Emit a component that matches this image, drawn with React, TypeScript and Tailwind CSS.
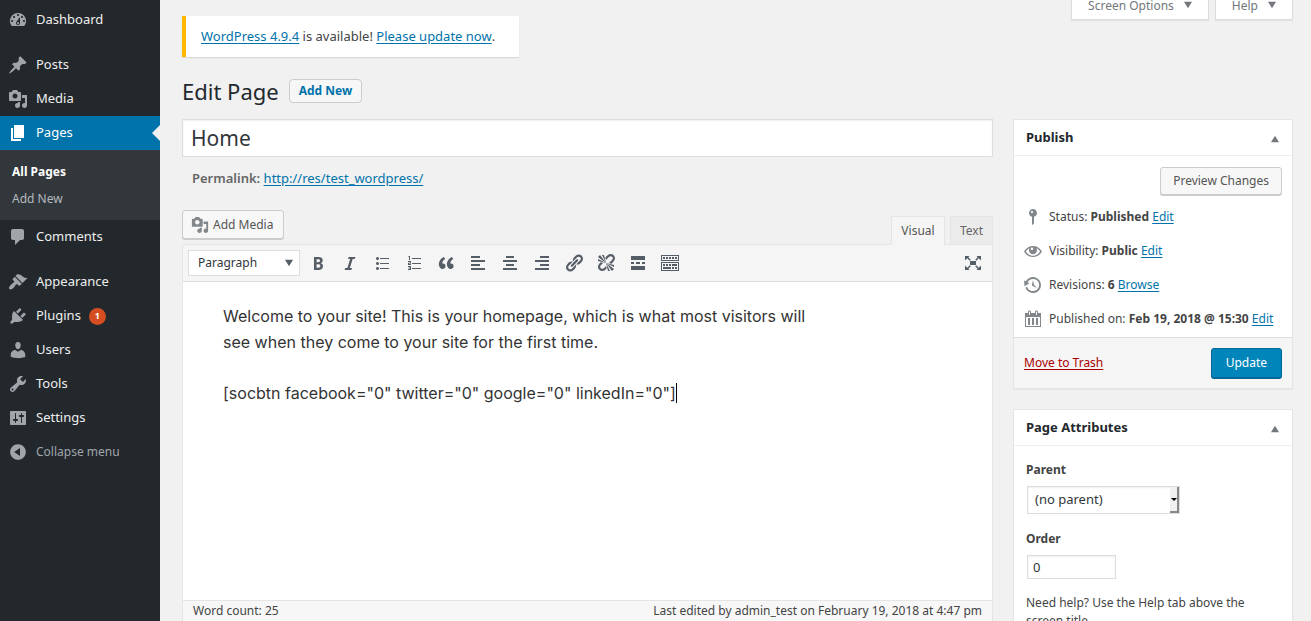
import React from "react";
import type { ReactNode } from "react";

const ICONS = {
  dashboard:
    "M3.76 16h12.48A7.998 7.998 0 0 0 10 3a7.998 7.998 0 0 0-6.24 13zM10 4c.55 0 1 .45 1 1s-.45 1-1 1-1-.45-1-1 .45-1 1-1zM6 6c.55 0 1 .45 1 1s-.45 1-1 1-1-.45-1-1 .45-1 1-1zm8 0c.55 0 1 .45 1 1s-.45 1-1 1-1-.45-1-1 .45-1 1-1zm-5.37 5.55L12 7v6c0 1.1-.9 2-2 2s-2-.9-2-2c0-.57.24-1.08.63-1.45zM4 10c.55 0 1 .45 1 1s-.45 1-1 1-1-.45-1-1 .45-1 1-1zm12 0c.55 0 1 .45 1 1s-.45 1-1 1-1-.45-1-1 .45-1 1-1zm-5 3c0-.55-.45-1-1-1s-1 .45-1 1 .45 1 1 1 1-.45 1-1z",
  post: "M10.44 3.02l1.82-1.82 6.36 6.35-1.83 1.82c-1.05-.68-2.48-.57-3.41.36l-.75.75c-.92.93-1.04 2.35-.35 3.41l-1.83 1.82-2.41-2.41-2.8 2.79c-.42.42-3.38 2.71-3.8 2.29s1.86-3.39 2.28-3.81l2.79-2.79L4.1 9.36l1.83-1.82c1.05.69 2.48.57 3.4-.36l.75-.75c.93-.92 1.05-2.35.36-3.41z",
  media:
    "M13 11V4c0-.55-.45-1-1-1h-1.67L9 1H5L3.67 3H2c-.55 0-1 .45-1 1v7c0 .55.45 1 1 1h10c.55 0 1-.45 1-1zM7 4.5c1.38 0 2.5 1.12 2.5 2.5S8.38 9.5 7 9.5 4.5 8.38 4.5 7 5.62 4.5 7 4.5zM14 6h5v10.5c0 1.38-1.12 2.5-2.5 2.5S14 17.88 14 16.5s1.12-2.5 2.5-2.5c.17 0 .34.02.5.05V9h-3V6zm-4 8.05V13h2v3.5c0 1.38-1.12 2.5-2.5 2.5S7 17.88 7 16.5 8.12 14 9.5 14c.17 0 .34.02.5.05z",
  page: "M6 15V2h10v13H6zm-1 1h8v2H3V5h2v11z",
  comments:
    "M5 2h9c1.1 0 2 .9 2 2v7c0 1.1-.9 2-2 2h-2l-5 5v-5H5c-1.1 0-2-.9-2-2V4c0-1.1.9-2 2-2z",
  appearance:
    "M14.48 11.06L7.41 3.99l1.5-1.5c.5-.56 2.3-.47 3.51.32 1.21.8 1.43 1.28 2.91 2.1 1.18.64 2.45 1.26 4.45.85zm-.71.71L6.7 4.7 4.93 6.47c-.39.39-.39 1.02 0 1.41l1.06 1.06c.39.39.39 1.03 0 1.42-.6.6-1.43 1.11-2.21 1.69-.35.26-.7.53-1.01.84C1.43 14.23.4 16.08 1.4 17.07c.99 1 2.84-.03 4.18-1.36.31-.31.58-.66.85-1.02.57-.78 1.08-1.61 1.69-2.21.39-.39 1.02-.39 1.41 0l1.06 1.06c.39.39 1.02.39 1.41 0z",
  plugins:
    "M13.11 4.36L9.87 7.6 8 5.73l3.24-3.24c.35-.34 1.05-.2 1.56.32.52.51.66 1.21.31 1.55zm-8 1.77l.91-1.12 9.01 9.01-1.19.84c-.71.71-2.63 1.16-3.82 1.16H6.14L4.9 17.26c-.59.59-1.54.59-2.12 0-.59-.58-.59-1.53 0-2.12l1.24-1.24v-3.88c0-1.13.4-3.19 1.09-3.89zm7.26 3.97l3.24-3.24c.34-.35 1.04-.21 1.55.31.52.51.66 1.21.31 1.55l-3.24 3.25z",
  users:
    "M10 9.25c-2.27 0-2.73-3.44-2.73-3.44C7 4.02 7.82 2 9.97 2c2.16 0 2.98 2.02 2.71 3.81 0 0-.41 3.44-2.68 3.44zm0 2.57L12.72 10c2.39 0 4.52 2.33 4.52 4.53v2.49s-3.65 1.13-7.24 1.13c-3.65 0-7.24-1.13-7.24-1.13v-2.49c0-2.25 1.94-4.48 4.47-4.48z",
  tools:
    "M16.68 9.77c-1.34 1.34-3.3 1.67-4.95.99l-5.41 6.52c-.99.99-2.59.99-3.58 0s-.99-2.59 0-3.57l6.52-5.42c-.68-1.65-.35-3.61.99-4.95 1.28-1.28 3.12-1.62 4.72-1.06l-2.89 2.89 2.82 2.82 2.86-2.87c.53 1.58.18 3.39-1.08 4.65zM3.81 16.21c.4.39 1.04.39 1.43 0 .4-.4.4-1.04 0-1.43-.39-.4-1.03-.4-1.43 0-.39.39-.39 1.03 0 1.43z",
  settings:
    "M18 16V4c0-.55-.45-1-1-1H3c-.55 0-1 .45-1 1v12c0 .55.45 1 1 1h14c.55 0 1-.45 1-1zM8 11h1c.55 0 1 .45 1 1s-.45 1-1 1H8v1.5c0 .28-.22.5-.5.5s-.5-.22-.5-.5V13H6c-.55 0-1-.45-1-1s.45-1 1-1h1V5.5c0-.28.22-.5.5-.5s.5.22.5.5V11zm5-2h-1c-.55 0-1-.45-1-1s.45-1 1-1h1V5.5c0-.28.22-.5.5-.5s.5.22.5.5V7h1c.55 0 1 .45 1 1s-.45 1-1 1h-1v5.5c0 .28-.22.5-.5.5s-.5-.22-.5-.5V9z",
  collapse:
    "M10 2.16c4.33 0 7.84 3.51 7.84 7.84s-3.51 7.84-7.84 7.84S2.16 14.33 2.16 10 5.71 2.16 10 2.16zm2 11.72V6.12L6.18 9.97z",
  bold: "M6 4v13h4.54c1.37 0 2.46-.33 3.26-1 .8-.66 1.2-1.58 1.2-2.77 0-.84-.17-1.51-.51-2.01s-.9-.85-1.67-1.03v-.09c.57-.1 1.02-.4 1.36-.9s.51-1.13.51-1.91c0-1.14-.39-1.98-1.17-2.5C12.75 4.26 11.5 4 9.78 4H6zm2.57 5.15V6.26h1.36c.73 0 1.27.11 1.61.32.34.22.51.58.51 1.07 0 .54-.16.92-.47 1.15s-.82.35-1.51.35h-1.5zm0 2.19h1.6c1.44 0 2.16.53 2.16 1.61 0 .6-.17 1.05-.51 1.34s-.86.43-1.57.43H8.57v-3.38z",
  italic: "M14.78 6h-2.13l-2.8 9h2.12l-.62 2H4.6l.62-2h2.14l2.8-9H8.03l.62-2h6.75z",
  ul: "M5.5 7C4.67 7 4 6.33 4 5.5 4 4.68 4.67 4 5.5 4 6.32 4 7 4.68 7 5.5 7 6.33 6.32 7 5.5 7zM8 5h9v1H8V5zm-2.5 7c-.83 0-1.5-.67-1.5-1.5C4 9.68 4.67 9 5.5 9c.82 0 1.5.68 1.5 1.5 0 .83-.68 1.5-1.5 1.5zM8 10h9v1H8v-1zm-2.5 7c-.83 0-1.5-.67-1.5-1.5 0-.82.67-1.5 1.5-1.5.82 0 1.5.68 1.5 1.5 0 .83-.68 1.5-1.5 1.5zM8 15h9v1H8v-1z",
  ol: "M5 3h1v4H5V4H4zM8 5h9v1H8zM4 8h3v2.6H5V11h2v1H4V9.7h2V9H4zM8 10h9v1H8zM4 13h3v4H4v-1h2v-.6H4.6v-.8H6V14H4zM8 15h9v1H8z",
  quote:
    "M9.49 13.22c0-.74-.2-1.38-.61-1.9-.62-.78-1.83-.88-2.53-.72-.29-1.65 1.11-3.75 2.92-4.65L7.88 4c-2.73 1.3-5.42 4.28-4.96 8.05C3.21 14.43 4.59 16 6.54 16c.85 0 1.56-.25 2.12-.75s.83-1.18.83-2.03zm8.05 0c0-.74-.2-1.38-.61-1.9-.63-.78-1.83-.88-2.53-.72-.29-1.65 1.11-3.75 2.92-4.65L15.93 4c-2.73 1.3-5.41 4.28-4.95 8.05.29 2.38 1.66 3.95 3.61 3.95.85 0 1.56-.25 2.12-.75s.83-1.18.83-2.03z",
  alignLeft: "M12 5V3H3v2h9zm5 4V7H3v2h14zm-5 4v-2H3v2h9zm5 4v-2H3v2h14z",
  alignCenter: "M14 5V3H6v2h8zm3 4V7H3v2h14zm-3 4v-2H6v2h8zm3 4v-2H3v2h14z",
  alignRight: "M17 5V3H8v2h9zm0 4V7H3v2h14zm0 4v-2H8v2h9zm0 4v-2H3v2h14z",
  link: "M17.74 2.76c1.68 1.69 1.68 4.41 0 6.1l-1.53 1.52c-1.12 1.12-2.7 1.47-4.14 1.09l2.62-2.61.76-.77.76-.76c.84-.84.84-2.2 0-3.04-.84-.85-2.2-.85-3.04 0l-.77.76-3.38 3.38c-.37-1.44-.02-3.02 1.1-4.14l1.52-1.53c1.69-1.68 4.42-1.68 6.1 0zM8.59 13.43l5.34-5.34c.42-.42.42-1.1 0-1.52-.44-.43-1.13-.39-1.53 0l-5.33 5.34c-.42.42-.42 1.1 0 1.52.44.43 1.13.39 1.52 0zm-.76 2.29l4.14-4.15c.38 1.44.03 3.02-1.09 4.14l-1.52 1.53c-1.69 1.68-4.41 1.68-6.1 0-1.68-1.68-1.68-4.42 0-6.1l1.53-1.52c1.12-1.12 2.7-1.47 4.14-1.1l-4.14 4.15c-.85.84-.85 2.2 0 3.05.84.84 2.2.84 3.04 0z",
  unlink:
    "M17.74 2.26c1.68 1.69 1.68 4.41 0 6.1l-1.53 1.52c-.32.33-.69.58-1.08.77L13 10l1.69-1.64.76-.77.76-.76c.84-.84.84-2.2 0-3.04-.84-.85-2.2-.85-3.04 0l-.77.76-.76.76L10 7l-.65-2.14c.19-.38.44-.75.77-1.07l1.52-1.53c1.69-1.68 4.42-1.68 6.1 0zM2 4l8 6-6-8zm4-2l4 8-2-8H6zM2 6l8 4-8-2V6zm7.36 7.69L10 13l.74 2.35-1.38 1.39c-1.69 1.68-4.41 1.68-6.1 0-1.68-1.68-1.68-4.42 0-6.1l1.39-1.38L7 10l-.69.64-1.52 1.53c-.85.84-.85 2.2 0 3.04.84.85 2.2.85 3.04 0zM18 16l-8-6 6 8zm-4 2l-4-8 2 8h2zm4-4l-8-4 8 2v2z",
  more: "M17 7V3H3v4h14zM6 11V9H3v2h3zm6 0V9H8v2h4zm5 0V9h-3v2h3zm0 6v-4H3v4h14z",
  kitchenSink:
    "M19 2v6H1V2h18zm-1 5V3H2v4h16zM5 4v2H3V4h2zm3 0v2H6V4h2zm3 0v2H9V4h2zm3 0v2h-2V4h2zm3 0v2h-2V4h2zm2 5v9H1V9h18zm-1 8v-7H2v7h16zM5 11v2H3v-2h2zm3 0v2H6v-2h2zm3 0v2H9v-2h2zm6 0v2h-5v-2h5zm-6 3v2H3v-2h8zm3 0v2h-2v-2h2zm3 0v2h-2v-2h2z",
  fullscreen:
    "M2 3h4.500L5.300 4.200 7.800 6.700 6.700 7.800 4.200 5.300 2 7.500zM18 3v4.500l-2.200-2.200-2.500 2.500-1.100-1.100 2.500-2.500L13.500 3zM2 17v-4.500l2.200 2.200 2.500-2.500 1.100 1.100-2.500 2.500L6.500 17zM18 17h-4.500l1.200-1.200-2.500-2.500 1.100-1.100 2.500 2.500 2.200-2.200zM7 8h6v4H7z",
  pin: "M14 6c0 1.86-1.28 3.41-3 3.86V16c0 1-2 2-2 2V9.86c-1.72-.45-3-2-3-3.86 0-2.21 1.79-4 4-4s4 1.79 4 4zM8 5c0 .55.45 1 1 1s1-.45 1-1-.45-1-1-1-1 .45-1 1z",
  eye: "M18.3 9.5C16.6 6.8 13.5 5 10 5S3.4 6.8 1.7 9.5l-.6 1 .6 1C3.4 14.2 6.5 16 10 16s6.600-1.800 8.300-4.500l.6-1zM10 14.800c-2.900 0-5.500-1.600-7.200-4.300 1-1.600 2.300-2.700 3.800-3.500-.4.700-.6 1.400-.6 2.200 0 2.200 1.800 4 4 4s4-1.800 4-4c0-.8-.2-1.500-.6-2.200 1.500.8 2.800 1.900 3.800 3.500-1.700 2.700-4.300 4.300-7.200 4.300zM9 6.500a1.300 1.300 0 1 0 0 2.600 1.300 1.300 0 0 0 0-2.600z",
  backup:
    "M13.65 2.88c3.93 2.01 5.48 6.84 3.47 10.77s-6.83 5.48-10.77 3.47c-1.87-.96-3.2-2.56-3.86-4.4l1.64-1.03c.45 1.57 1.52 2.95 3.08 3.76 3.01 1.54 6.69.35 8.23-2.66 1.55-3.01.36-6.69-2.65-8.24C9.78 3.01 6.1 4.2 4.56 7.21l1.88.97-4.95 3.08-.39-5.82 1.78.91C4.9 2.4 9.75.89 13.65 2.88zm-4.36 7.83C9.11 10.53 9 10.28 9 10c0-.07.03-.12.04-.19h-.01L10 5l.97 4.81L14 13l-4.5-2.12.02-.02c-.08-.04-.16-.09-.23-.15z",
  calendar:
    "M15 4h3v14H2V4h3V3c0-.83.67-1.5 1.5-1.5S8 2.17 8 3v1h4V3c0-.83.67-1.5 1.5-1.5S15 2.17 15 3v1zM6 3v2.5c0 .28.22.5.5.5s.5-.22.5-.5V3c0-.28-.22-.5-.5-.5S6 2.72 6 3zm7 0v2.5c0 .28.22.5.5.5s.5-.22.5-.5V3c0-.28-.22-.5-.5-.5s-.5.22-.5.5zm4 14V8H3v9h14zM7 16V9H5v7h2zm4 0V9H9v7h2zm4 0V9h-2v7h2z",
  down: "M5 6h10l-5 8z",
  up: "M5 14h10l-5-8z",
};

type IconName = keyof typeof ICONS;

function Icon({ name, className = "size-5" }: { name: IconName; className?: string }) {
  return (
    <svg viewBox="0 0 20 20" aria-hidden="true" className={`shrink-0 fill-current ${className}`}>
      <path fillRule="evenodd" d={ICONS[name]} />
    </svg>
  );
}

function MenuItem({ icon, label, badge }: { icon: IconName; label: string; badge?: string }) {
  return (
    <li>
      <a href="#" className="flex h-[34px] items-center gap-2 px-2 text-[13px] text-[#eee]">
        <Icon name={icon} className="size-5 text-[#a0a5aa]" />
        {label}
        {badge && (
          <span className="flex size-[17px] items-center justify-center rounded-full bg-[#d54e21] text-[9px] font-bold text-white">
            {badge}
          </span>
        )}
      </a>
    </li>
  );
}

function Sidebar() {
  return (
    <nav aria-label="Main menu" className="w-40 shrink-0 bg-[#23282d] pt-[3px]">
      <ul>
        <MenuItem icon="dashboard" label="Dashboard" />
        <li className="h-[11px]" />
        <MenuItem icon="post" label="Posts" />
        <MenuItem icon="media" label="Media" />
        <li>
          <a
            href="#"
            className="relative flex h-[34px] items-center gap-2 bg-[#0073aa] px-2 text-[13px] text-white"
          >
            <Icon name="page" />
            Pages
            <span className="absolute top-1/2 right-0 -translate-y-1/2 border-8 border-transparent border-r-[#f1f1f1]" />
          </a>
          <ul className="bg-[#32373c] px-3 py-2 text-[12px]">
            <li>
              <a href="#" className="flex h-[27px] items-center font-bold text-white">
                All Pages
              </a>
            </li>
            <li>
              <a href="#" className="flex h-[27px] items-center text-[#b4b9be]">
                Add New
              </a>
            </li>
          </ul>
        </li>
        <MenuItem icon="comments" label="Comments" />
        <li className="h-[11px]" />
        <MenuItem icon="appearance" label="Appearance" />
        <MenuItem icon="plugins" label="Plugins" badge="1" />
        <MenuItem icon="users" label="Users" />
        <MenuItem icon="tools" label="Tools" />
        <MenuItem icon="settings" label="Settings" />
        <li>
          <button type="button" className="flex h-[34px] items-center gap-2 px-2 text-[12px] text-[#a0a5aa]">
            <Icon name="collapse" />
            Collapse menu
          </button>
        </li>
      </ul>
    </nav>
  );
}

function TextLink({ children }: { children: ReactNode }) {
  return (
    <a href="#" className="text-[#0073aa] underline underline-offset-2">
      {children}
    </a>
  );
}

function ScreenTab({ children }: { children: ReactNode }) {
  return (
    <button
      type="button"
      className="flex h-5 items-start gap-[6px] border border-t-0 border-[#ddd] bg-white pr-3 pl-4 text-[12px] leading-3 text-[#72777c] shadow-[0_1px_1px_rgba(0,0,0,0.06)]"
    >
      {children}
      <Icon name="down" className="-mt-[3px] size-4" />
    </button>
  );
}

const TOOLS: { icon: IconName; label: string }[] = [
  { icon: "bold", label: "Bold" },
  { icon: "italic", label: "Italic" },
  { icon: "ul", label: "Bulleted list" },
  { icon: "ol", label: "Numbered list" },
  { icon: "quote", label: "Blockquote" },
  { icon: "alignLeft", label: "Align left" },
  { icon: "alignCenter", label: "Align center" },
  { icon: "alignRight", label: "Align right" },
  { icon: "link", label: "Insert link" },
  { icon: "unlink", label: "Remove link" },
  { icon: "more", label: "Insert Read More tag" },
  { icon: "kitchenSink", label: "Toolbar toggle" },
];

function Editor() {
  return (
    <section aria-label="Editor" className="mt-[22px]">
      <div className="flex items-end justify-between">
        <button
          type="button"
          className="mb-[5px] flex h-[29px] items-center gap-1 rounded-[3px] border border-[#ccc] bg-[#f7f7f7] pr-[10px] pl-2 text-[12px] text-[#555] shadow-[0_1px_0_#ccc]"
        >
          <Icon name="media" className="size-[18px] text-[#82878c]" />
          Add Media
        </button>
        <div className="flex gap-[5px]">
          <button
            type="button"
            className="relative z-10 -mb-px h-[29px] w-[54px] border border-b-0 border-[#e5e5e5] bg-[#f5f5f5] text-[12px] text-[#555]"
          >
            Visual
          </button>
          <button
            type="button"
            className="h-7 w-[43px] border border-b-0 border-[#e5e5e5] bg-[#ebebeb] text-[12px] text-[#666]"
          >
            Text
          </button>
        </div>
      </div>
      <div className="border border-[#e5e5e5] bg-white">
        <div className="flex h-[37px] items-center border-b border-[#ddd] bg-[#f5f5f5] px-[5px] text-[#555d66]">
          <button
            type="button"
            className="flex h-[26px] w-28 items-center justify-between border border-[#ddd] bg-white pr-0.5 pl-[9px] text-[12px] text-[#32373c]"
          >
            Paragraph
            <Icon name="down" className="size-4 text-[#555d66]" />
          </button>
          <div className="ml-2 flex gap-3">
            {TOOLS.map((tool) => (
              <button key={tool.icon} type="button" aria-label={tool.label} className="size-5">
                <Icon name={tool.icon} />
              </button>
            ))}
          </div>
          <button type="button" aria-label="Distraction-free writing" className="mr-1 ml-auto size-5">
            <Icon name="fullscreen" />
          </button>
        </div>
        <div className="min-h-[318px] px-10 pt-[21px] font-[Inter,sans-serif] text-[16px] leading-[26px] text-[#333]">
          <p className="max-w-[600px]">
            Welcome to your site! This is your homepage, which is what most visitors will
            <br />
            see when they come to your site for the first time.
          </p>
          <p className="mt-[25px] flex items-center">
            [socbtn facebook="0" twitter="0" google="0" linkedIn="0"]
            <span className="h-5 w-px bg-black" />
          </p>
        </div>
        <div className="flex h-7 items-start justify-between border-t border-[#e5e5e5] bg-[#f7f7f7] px-[10px] leading-5">
          <span>Word count: 25</span>
          <span>Last edited by admin_test on February 19, 2018 at 4:47 pm</span>
        </div>
      </div>
    </section>
  );
}

function Panel({ title, children }: { title: string; children: ReactNode }) {
  return (
    <section className="border border-[#e5e5e5] bg-white shadow-[0_1px_1px_rgba(0,0,0,0.04)]">
      <header className="flex h-9 items-center justify-between border-b border-[#eee] pr-[9px] pl-3">
        <h2 className="text-[13px] font-bold text-[#23282d]">{title}</h2>
        <button type="button" aria-label={`Toggle panel: ${title}`} className="pt-0.5 text-[#72777c]">
          <Icon name="up" className="size-4" />
        </button>
      </header>
      {children}
    </section>
  );
}

function StatusRow({
  icon,
  label,
  value,
  action,
}: {
  icon: IconName;
  label: string;
  value: string;
  action: string;
}) {
  return (
    <div className="flex h-[34px] items-center gap-[6px] whitespace-nowrap">
      <Icon name={icon} className="size-5 text-[#82878c]" />
      <span>
        {label} <b>{value}</b> <TextLink>{action}</TextLink>
      </span>
    </div>
  );
}

export default function App() {
  return (
    <div className="flex h-screen overflow-hidden bg-[#f1f1f1] font-['Noto_Sans',sans-serif] text-[12px] text-[#444]">
      <Sidebar />
      <main className="min-w-0 flex-1 pr-[18px] pl-[22px]">
        <div className="flex items-start justify-between">
          <p className="mt-4 flex h-[41px] items-center border-l-4 border-[#ffb900] bg-white pr-6 pl-[15px] text-[13px] whitespace-pre shadow-[0_1px_1px_rgba(0,0,0,0.1)]">
            <TextLink>WordPress 4.9.4</TextLink> is available! <TextLink>Please update now</TextLink>.
          </p>
          <div className="flex gap-[6px]">
            <ScreenTab>Screen Options</ScreenTab>
            <ScreenTab>Help</ScreenTab>
          </div>
        </div>
        <div className="mt-[18px] flex h-8 items-center gap-[10px]">
          <h1 className="text-[22px] leading-8 text-[#23282d]">Edit Page</h1>
          <a
            href="#"
            className="flex h-6 items-center rounded-sm border border-[#ccc] bg-[#f7f7f7] px-[9px] text-[12px] font-bold text-[#0073aa]"
          >
            Add New
          </a>
        </div>
        <div className="mt-3 flex items-start gap-5">
          <div className="min-w-0 flex-1">
            <input
              type="text"
              aria-label="Title"
              defaultValue="Home"
              className="block h-[38px] w-full border border-[#ddd] bg-white px-2 text-[21px] text-[#32373c] shadow-[inset_0_1px_2px_rgba(0,0,0,0.07)]"
            />
            <p className="mt-[11px] px-[10px] text-[13px] leading-5">
              <b className="font-semibold text-[#666]">Permalink:</b> <TextLink>http://res/test_wordpress/</TextLink>
            </p>
            <Editor />
          </div>
          <aside className="flex w-[280px] shrink-0 flex-col gap-5">
            <Panel title="Publish">
              <div className="flex flex-col pt-[11px] pr-[10px] pl-[9px]">
                <button
                  type="button"
                  className="h-7 self-end rounded-[3px] border border-[#ccc] bg-[#f7f7f7] px-3 text-[#555] shadow-[0_1px_0_#ccc]"
                >
                  Preview Changes
                </button>
                <div className="mt-[5px] pb-px">
                  <StatusRow icon="pin" label="Status:" value="Published" action="Edit" />
                  <StatusRow icon="eye" label="Visibility:" value="Public" action="Edit" />
                  <StatusRow icon="backup" label="Revisions:" value="6" action="Browse" />
                  <StatusRow icon="calendar" label="Published on:" value="Feb 19, 2018 @ 15:30" action="Edit" />
                </div>
              </div>
              <footer className="flex h-[51px] items-center justify-between border-t border-[#ddd] bg-[#f5f5f5] px-[10px]">
                <a href="#" className="text-[#a00] underline underline-offset-2">
                  Move to Trash
                </a>
                <button
                  type="button"
                  className="h-[30px] rounded-[3px] border border-[#006799] bg-[#0085ba] px-[14px] text-white shadow-[0_1px_0_#006799]"
                >
                  Update
                </button>
              </footer>
            </Panel>
            <Panel title="Page Attributes">
              <div className="flex flex-col items-start px-3 pt-[14px]">
                <label htmlFor="parent" className="leading-5 font-bold">
                  Parent
                </label>
                <div className="relative mx-px mt-[6px]">
                  <select
                    id="parent"
                    className="block h-7 w-[153px] appearance-none border border-[#ddd] bg-white px-[7px] text-[13px] text-[#32373c] shadow-[inset_0_1px_2px_rgba(0,0,0,0.07)]"
                  >
                    <option>(no parent)</option>
                  </select>
                  <span className="pointer-events-none absolute inset-y-px right-px flex w-[9px] items-center justify-center border-r-2 border-b-2 border-[#888] bg-[#f0f0f0] text-black">
                    <span className="border-x-[3px] border-t-[3px] border-x-transparent border-t-black" />
                  </span>
                </div>
                <label htmlFor="order" className="mt-[15px] leading-5 font-bold">
                  Order
                </label>
                <input
                  id="order"
                  type="text"
                  defaultValue="0"
                  className="mx-px mt-[6px] h-6 w-[89px] border border-[#ddd] bg-white px-[5px] text-[13px] text-[#32373c] shadow-[inset_0_1px_2px_rgba(0,0,0,0.07)]"
                />
                <p className="mt-[15px] leading-[18px]">Need help? Use the Help tab above the screen title.</p>
              </div>
            </Panel>
          </aside>
        </div>
      </main>
    </div>
  );
}
